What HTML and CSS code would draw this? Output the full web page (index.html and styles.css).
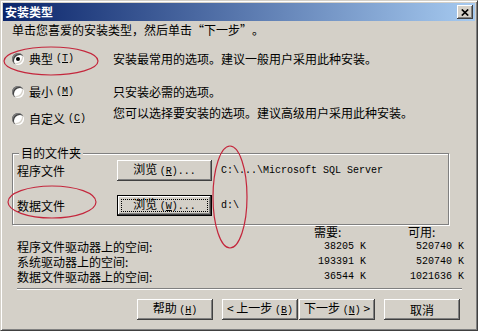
FILE: index.html
```html
<!DOCTYPE html>
<html lang="zh-CN">
<head>
    <meta charset="UTF-8">
    <title>安装类型</title>
    <link rel="stylesheet" href="styles.css">
</head>
<body>
    <div class="window">
        <div class="titlebar">
            <span class="title">安装类型</span>
            <span class="close">
                <svg width="8" height="7" viewBox="0 0 8 7"><path d="M0.8 0.5L7.2 6.5M7.2 0.5L0.8 6.5" stroke="#000" stroke-width="1.7" fill="none"/></svg>
            </span>
        </div>

        <div class="content">
            <p class="intro">单击您喜爱的安装类型，然后单击<span class="q">“</span>下一步<span class="q">”</span>。</p>

            <!-- Tipos de instalación -->
            <div class="options">
                <div class="opt">
                    <label class="radio-label"><span class="radio checked"></span>典型 <span class="en">(<u>T</u>)</span></label>
                    <span class="desc">安装最常用的选项。建议一般用户采用此种安装。</span>
                </div>
                <div class="opt opt-min">
                    <label class="radio-label"><span class="radio"></span>最小 <span class="en">(<u>M</u>)</span></label>
                    <span class="desc">只安装必需的选项。</span>
                </div>
                <div class="opt opt-custom">
                    <label class="radio-label"><span class="radio"></span>自定义 <span class="en">(<u>C</u>)</span></label>
                    <span class="desc">您可以选择要安装的选项。建议高级用户采用此种安装。</span>
                </div>
            </div>

            <fieldset class="group">
                <legend>目的文件夹</legend>
                <div class="folder-row">
                    <span>程序文件</span>
                    <button class="btn browse">浏览 <span class="en">(<u>R</u>)...</span></button>
                    <span class="path en">C:\...\Microsoft SQL Server</span>
                </div>
                <div class="folder-row second">
                    <span>数据文件</span>
                    <button class="btn browse default">浏览 <span class="en">(<u>W</u>)...</span></button>
                    <span class="path en">d:\</span>
                </div>
            </fieldset>

            <div class="space">
                <span></span>
                <span class="head need">需要:</span>
                <span class="head avail">可用:</span>

                <span>程序文件驱动器上的空间:</span>
                <span class="num en">38205 K</span>
                <span class="num en">520740 K</span>

                <span>系统驱动器上的空间:</span>
                <span class="num en">193391 K</span>
                <span class="num en">520740 K</span>

                <span>数据文件驱动器上的空间:</span>
                <span class="num en">36544 K</span>
                <span class="num en">1021636 K</span>
            </div>

            <div class="sep"></div>

            <div class="actions">
                <button class="btn">帮助 <span class="en">(<u>H</u>)</span></button>
                <button class="btn back">&lt; 上一步 <span class="en">(<u>B</u>)</span></button>
                <button class="btn next">下一步 <span class="en">(<u>N</u>)</span> &gt;</button>
                <button class="btn cancel">取消</button>
            </div>
        </div>

        <!-- marcas rojas encima -->
        <svg class="marks" width="478" height="331" viewBox="0 0 478 331">
            <g fill="none" stroke="#c4263c" stroke-width="1.2">
                <ellipse cx="51" cy="61" rx="47" ry="14"/>
                <ellipse cx="52" cy="202" rx="44" ry="16"/>
                <ellipse cx="230" cy="197" rx="17" ry="51"/>
            </g>
        </svg>
    </div>
</body>
</html>
```

FILE: styles.css
```css
* {
    margin: 0;
    padding: 0;
    box-sizing: border-box;
}

body, html {
    font-family: "Noto Sans CJK SC", sans-serif;
    font-size: 12px;
    line-height: 14px;
    color: #000;
    background-color: #d4d0c8;
}

.en {
    font-family: "Liberation Mono", monospace;
    font-size: 10px;
}

.window {
    position: relative;
    width: 478px;
    height: 331px;
    background-color: #d4d0c8;
    border: 1px solid;
    border-color: #d4d0c8 #404040 #404040 #d4d0c8;
    box-shadow: inset 1px 1px #fff, inset -1px -1px #808080;
    padding: 2px;
}

/* barra de título */
.titlebar {
    height: 18px;
    display: flex;
    align-items: center;
    justify-content: space-between;
    padding: 0 2px;
    background: linear-gradient(to right, #0a246a, #a6caf0);
}

.title {
    color: white;
    font-weight: bold;
    font-size: 12px;
    line-height: 18px;
}

.close {
    width: 16px;
    height: 14px;
    display: flex;
    align-items: center;
    justify-content: center;
    background-color: #d4d0c8;
    box-shadow: inset -1px -1px #404040, inset 1px 1px #fff, inset -2px -2px #808080;
}

.content {
    padding-left: 9px;
}

.intro {
    margin-top: 2px;
}

/* comillas de ancho completo */
.q {
    display: inline-block;
    width: 12px;
}

.intro .q:first-child,
.intro .q + .q {
    text-align: right;
}

.options {
    margin-top: 15px;
}

.opt {
    display: flex;
    align-items: center;
    height: 14px;
}

.opt-min {
    margin-top: 19px;
}

.opt-custom {
    margin-top: 7px;
    height: 20px;
    align-items: flex-start;
}

.opt-custom .radio-label {
    margin-top: 6px;
}

.radio-label {
    width: 101px;
    display: flex;
    align-items: center;
    gap: 5px;
}

.radio-label .en {
    margin-left: -2px;
}

.radio {
    width: 12px;
    height: 12px;
    border-radius: 50%;
    background-color: #fff;
    box-shadow: inset 1px 1px #808080, inset 2px 2px #404040, inset -1px -1px #fff, inset -2px -2px #d4d0c8;
    display: flex;
    align-items: center;
    justify-content: center;
}

.radio.checked::after {
    content: "";
    width: 4px;
    height: 4px;
    border-radius: 50%;
    background-color: #000;
}

/* grupo de carpetas */
.group {
    margin-top: 20px;
    width: 437px;
    border: 1px solid #808080;
    box-shadow: inset 1px 1px #fff, 1px 1px #fff;
    padding: 0 4px 8px;
}

.group legend {
    margin-left: 2px;
    padding: 0 2px;
    line-height: 14px;
    background-color: #d4d0c8;
}

.folder-row {
    display: grid;
    grid-template-columns: 100px 95px auto;
    align-items: center;
    height: 21px;
}

.folder-row.second {
    margin-top: 14px;
}

.path {
    margin-left: 9px;
}

/* botones */
.btn {
    position: relative;
    width: 76px;
    height: 21px;
    border: none;
    background-color: #d4d0c8;
    font-family: "Noto Sans CJK SC", sans-serif;
    font-size: 12px;
    line-height: 14px;
    color: #000;
    box-shadow: inset -1px -1px #404040, inset 1px 1px #fff, inset -2px -2px #808080;
}

.btn.browse {
    width: 95px;
}

.btn.default {
    border: 1px solid #000;
}

.btn.default::after {
    content: "";
    position: absolute;
    inset: 3px;
    border: 1px dotted #000;
}

/* espacio en disco */
.space {
    margin-left: 5px;
    display: grid;
    grid-template-columns: 283px 66px 98px;
    grid-template-rows: 14px 15px 15px 15px;
    line-height: 15px;
}

.space .head {
    line-height: 14px;
}

.need {
    margin-left: 14px;
}

.avail {
    margin-left: 42px;
}

.num {
    text-align: right;
}

.sep {
    margin: 4px 0 0 5px;
    width: 445px;
    height: 2px;
    border-top: 1px solid #808080;
    border-bottom: 1px solid #fff;
}

.actions {
    margin-top: 9px;
    display: flex;
    padding-left: 125px;
}

.back {
    margin-left: 9px;
}

.next {
    margin-left: 1px;
}

.cancel {
    margin-left: 9px;
}

.marks {
    position: absolute;
    left: -1px;
    top: -1px;
    pointer-events: none;
}
```
